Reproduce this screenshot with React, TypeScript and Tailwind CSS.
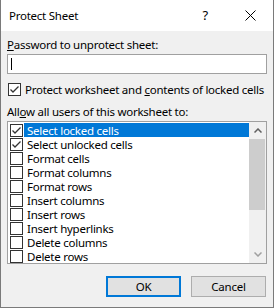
import React from 'react';

const items = [
  { label: 'Select locked cells', checked: true, selected: true },
  { label: 'Select unlocked cells', checked: true },
  { label: 'Format cells' },
  { label: 'Format columns' },
  { label: 'Format rows' },
  { label: 'Insert columns' },
  { label: 'Insert rows' },
  { label: 'Insert hyperlinks' },
  { label: 'Delete columns' },
  { label: 'Delete rows' },
];

function CheckBox({ checked }: { checked?: boolean }) {
  return (
    <div className="w-[13px] h-[13px] shrink-0 border border-[#333333] bg-white flex items-center justify-center">
      {checked && (
        <svg width="11" height="11" viewBox="0 0 11 11">
          <polyline points="1.5,5.5 4,8 9.5,2.5" fill="none" stroke="#333333" strokeWidth="1.3" />
        </svg>
      )}
    </div>
  );
}

export default function App() {
  return (
    <div className="w-[274px] h-[308px] bg-[#f0f0f0] border-x border-b border-[#7a7a7a] flex flex-col font-['Noto_Sans',sans-serif] text-[11.5px] tracking-[-0.25px] text-black leading-[15px] whitespace-nowrap">
      {/* Title bar */}
      <div className="h-[31px] bg-white flex items-center shrink-0">
        <span className="ml-[8px]">Protect Sheet</span>
        <span className="ml-auto mr-[37px] text-[13px]">?</span>
        <svg width="11" height="11" viewBox="0 0 11 11" className="mr-[17px]">
          <path d="M0.5 0.5 L10.5 10.5 M10.5 0.5 L0.5 10.5" stroke="#000" strokeWidth="1" />
        </svg>
      </div>

      <div className="flex flex-col px-[6px]">
        <div className="mt-[6px]">
          <u>P</u>assword to unprotect sheet:
        </div>
        <div className="mt-[2px] h-[20px] border border-[#a0a0a0] bg-white flex items-center">
          <div className="ml-[3px] w-px h-[12px] bg-black" />
        </div>

        <div className="mt-[8px] flex items-center gap-[4px] pl-[1px]">
          <CheckBox checked />
          <span>
            Protect worksheet and <u>c</u>ontents of locked cells
          </span>
        </div>

        <div className="mt-[7px]">
          All<u>o</u>w all users of this worksheet to:
        </div>

        <div className="mt-[2px] h-[143px] border border-[#a0a0a0] bg-white flex">
          <div className="flex-1 flex flex-col pt-[1px]">
            {items.map((it) => (
              <div key={it.label} className="h-[14px] flex items-center">
                <div className="ml-[2px]">
                  <CheckBox checked={it.checked} />
                </div>
                <div
                  className={
                    it.selected
                      ? 'ml-[1px] flex-1 h-[14px] flex items-center pl-[3px] bg-[#0078d7] text-white'
                      : 'ml-[1px] flex-1 h-[14px] flex items-center pl-[3px]'
                  }
                >
                  {it.label}
                </div>
              </div>
            ))}
          </div>
          <div className="w-[17px] bg-[#f0f0f0] flex flex-col">
            <div className="h-[17px] flex items-center justify-center">
              <svg width="8" height="5" viewBox="0 0 8 5">
                <polyline points="0.5,4.5 4,1 7.5,4.5" fill="none" stroke="#606060" strokeWidth="1.5" />
              </svg>
            </div>
            <div className="h-[71px] mr-[1px] bg-[#cdcdcd]" />
            <div className="flex-1" />
            <div className="h-[17px] flex items-center justify-center">
              <svg width="8" height="5" viewBox="0 0 8 5">
                <polyline points="0.5,0.5 4,4 7.5,0.5" fill="none" stroke="#a0a0a0" strokeWidth="1.5" />
              </svg>
            </div>
          </div>
        </div>

        <div className="mt-[12px] flex justify-end gap-[10px] pr-[1px]">
          <div className="w-[75px] h-[21px] border-2 border-[#0078d7] bg-[#e1e1e1] flex items-center justify-center">
            OK
          </div>
          <div className="w-[75px] h-[21px] border border-[#adadad] bg-[#e1e1e1] flex items-center justify-center">
            Cancel
          </div>
        </div>
      </div>
    </div>
  );
}
